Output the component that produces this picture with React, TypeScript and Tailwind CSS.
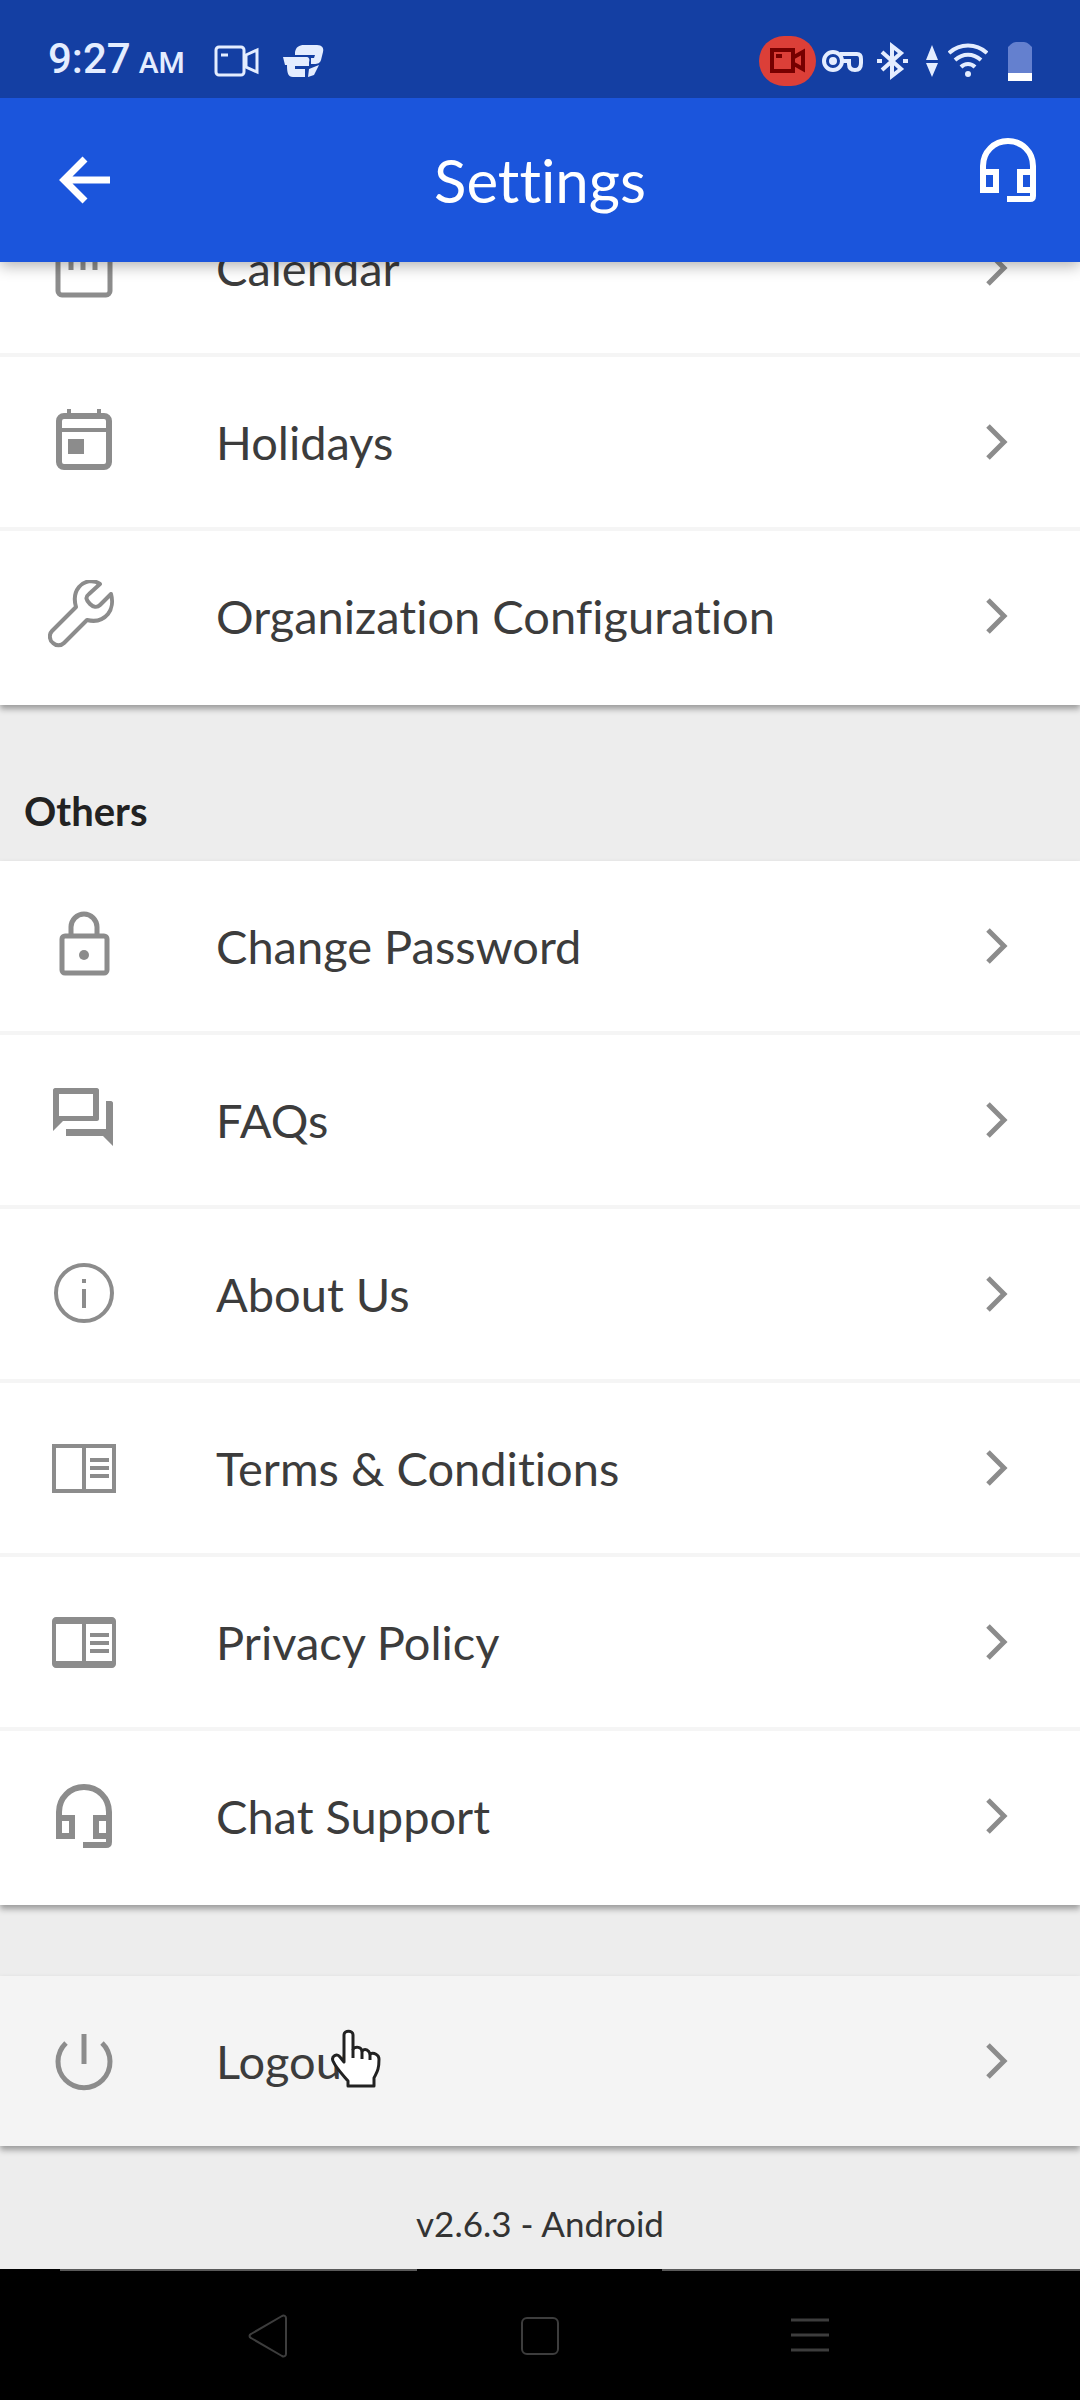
import type { ReactNode } from 'react';

type Item = { label: string; icon: ReactNode };

const Glyph = ({ children }: { children: ReactNode }) => (
    <svg
        className="size-18 shrink-0"
        viewBox="0 0 72 72"
        fill="none"
        stroke="currentColor"
        strokeWidth={5}
        aria-hidden="true"
    >
        {children}
    </svg>
);

const CalendarIcon = () => (
    <Glyph>
        <rect x="10" y="11" width="52" height="52" rx="4" strokeWidth={5} />
        <path d="M10 22H62M21 4V10M51 4V10" strokeWidth={4} />
        <path d="M23 30V38M35 30V38M47 30V38" />
    </Glyph>
);

const HolidayIcon = () => (
    <Glyph>
        <rect x="11" y="10" width="50" height="51" rx="5" strokeWidth={6} />
        <path d="M11 24H61M21 3V9M51 3V9" strokeWidth={4} />
        <rect x="20" y="33" width="16" height="15" fill="currentColor" stroke="none" />
    </Glyph>
);

const WrenchIcon = () => (
    <Glyph>
        <path
            d="M52 4C45 -1 36 1 31 7C26 13 26 20 28 27L4 51C1 54 1 60 5 63C8 66 13 66 16 63L39 40C47 42 55 40 60 34C64 29 65 21 63 14L52 25C49 28 45 27 42 24C38 20 37 17 41 14Z"
            strokeWidth={4}
            strokeLinejoin="round"
        />
    </Glyph>
);

const LockIcon = () => (
    <Glyph>
        <rect x="14" y="26" width="45" height="37" rx="3" />
        <path d="M23 26V17C23 10 29 4 36 4S49 10 49 17V26" />
        <circle cx="36" cy="45" r="5" fill="currentColor" stroke="none" />
    </Glyph>
);

const ForumIcon = () => (
    <Glyph>
        <path
            d="M7 4H49C50 4 51 5 51 6V35C51 36 50 37 49 37H15L5 47V6C5 5 6 4 7 4ZM11 10V32H45V10ZM58 17H63C64 17 65 18 65 19V62L55 52H18V45H58Z"
            fill="currentColor"
            fillRule="evenodd"
            stroke="none"
        />
    </Glyph>
);

const InfoIcon = () => (
    <Glyph>
        <circle cx="36" cy="35" r="28" strokeWidth={4} />
        <path d="M36 21V25M36 31V50" strokeWidth={4} />
    </Glyph>
);

const TermsIcon = () => (
    <Glyph>
        <path d="M6 14H66V59H6ZM36 14V59M42 28H61M42 36H61M42 44H61" strokeWidth={4} />
    </Glyph>
);

const PrivacyIcon = () => (
    <Glyph>
        <path
            d="M8 11H64C66 11 68 13 68 15V58C68 60 66 62 64 62H8C6 62 4 60 4 58V15C4 13 6 11 8 11ZM8 18V55H34V18ZM38 18V55H64V18Z"
            fill="currentColor"
            fillRule="evenodd"
            stroke="none"
        />
        <path d="M42 29H61M42 37H61M42 45H61" strokeWidth={4} />
    </Glyph>
);

const HeadsetIcon = () => (
    <Glyph>
        <path d="M11 38V32C11 18 22 7 36 7S61 18 61 32V62C61 64 60 65 58 65H35" strokeWidth={6} />
        <path d="M11 38H24V56H11ZM61 38H48V56H61" strokeWidth={6} />
    </Glyph>
);

const PowerIcon = () => (
    <Glyph>
        <path d="M18 18A26 26 0 1 0 54 18M36 9V39" strokeWidth={5} />
    </Glyph>
);

const Chevron = () => (
    <svg className="h-9 w-6 shrink-0" viewBox="0 0 24 36" fill="none" stroke="currentColor" strokeWidth={5} aria-hidden="true">
        <path d="M4 2L20 18L4 34" />
    </svg>
);

const HandCursor = () => (
    <svg className="absolute left-[114px] -top-1 h-[60px] w-[52px]" viewBox="0 0 52 60" aria-hidden="true">
        <path
            d="M14 33V6C14 1 23 1 23 6V20C26 17 31 18 32 22C35 19 39 21 40 25C44 23 49 26 49 30C49 41 47 43 44 49V57H18V52C12 45 6 39 3 32C1 27 7 24 10 28Z"
            fill="#fff"
            stroke="#222"
            strokeWidth={3}
            strokeLinejoin="round"
        />
        <path d="M23 20V29M32 22V30M40 25V31" stroke="#222" strokeWidth={3} />
    </svg>
);

const orgItems: Item[] = [
    { label: 'Calendar', icon: <CalendarIcon /> },
    { label: 'Holidays', icon: <HolidayIcon /> },
    { label: 'Organization Configuration', icon: <WrenchIcon /> },
];

const otherItems: Item[] = [
    { label: 'Change Password', icon: <LockIcon /> },
    { label: 'FAQs', icon: <ForumIcon /> },
    { label: 'About Us', icon: <InfoIcon /> },
    { label: 'Terms & Conditions', icon: <TermsIcon /> },
    { label: 'Privacy Policy', icon: <PrivacyIcon /> },
    { label: 'Chat Support', icon: <HeadsetIcon /> },
];

const Row = ({ label, icon, children }: Item & { children?: ReactNode }) => (
    <button type="button" className="flex h-[170px] w-full items-center pr-[72px] pl-12 text-left text-[#8c8c8c]">
        {icon}
        <span className="relative ml-24 flex-1 text-[47px] leading-[56px] text-[#3c3c3c]">
            {label}
            {children}
        </span>
        <Chevron />
    </button>
);

const Card = ({ items }: { items: Item[] }) => (
    <ul className="bg-white shadow-[0_4px_6px_rgba(0,0,0,0.35)]">
        {items.map((item) => (
            <li key={item.label} className="border-b-4 border-[#f5f5f5] last:border-white">
                <Row {...item} />
            </li>
        ))}
    </ul>
);

const StatusBar = () => (
    <div className="flex h-[98px] items-center justify-between bg-[#143fa3] pt-6 pr-12 pl-12 text-[#e4edff]">
        <div className="flex items-center">
            <p className="flex items-baseline gap-2 font-[Roboto,sans-serif] text-[42px] leading-[52px] font-medium">
                9:27 <span className="text-[30px]">AM</span>
            </p>
            <svg className="ml-7 h-8 w-12" viewBox="0 0 48 32" fill="none" stroke="currentColor" strokeWidth={3} aria-hidden="true">
                <rect x="3" y="2" width="28" height="28" rx="3" />
                <path d="M33 10L44 5V27L33 22ZM8 10H15" />
            </svg>
            <svg className="ml-5 h-9 w-11" viewBox="0 0 44 36" fill="currentColor" aria-hidden="true">
                <path d="M14 9C15 4 18 2 23 2H36C41 2 43 5 42 9L40 17C39 20 37 21 33 21H30V15H33L34 12H14Z" />
                <path d="M2 14H25C28 14 29 16 28 19V23H14V26H24V34H12C7 34 6 30 6 22H4Z" />
                <path d="M28 26L38 22L33 32L27 34Z" />
            </svg>
        </div>
        <div className="flex items-center">
            <span className="flex h-[50px] w-[57px] items-center justify-center rounded-full bg-[#dc3f38]">
                <svg className="h-7 w-9" viewBox="0 0 36 28" fill="none" stroke="#760000" strokeWidth={4} aria-hidden="true">
                    <path d="M2 3H23V24H2ZM24 10L33 5V22L24 17M6 9H12" />
                </svg>
            </span>
            <svg className="ml-1 h-7 w-11" viewBox="0 0 44 28" fill="none" stroke="currentColor" strokeWidth={4} aria-hidden="true">
                <circle cx="13" cy="14" r="9" />
                <circle cx="13" cy="14" r="2" fill="currentColor" />
                <path d="M20 7H37C40 7 41 9 41 12V16C41 21 39 23 35 23S29 21 29 17V14H22" />
            </svg>
            <svg className="ml-3 h-10 w-8" viewBox="0 0 32 40" fill="none" stroke="currentColor" strokeWidth={4} aria-hidden="true">
                <path d="M6 11L25 28L16 35V5L25 12L6 29" />
                <path d="M1 20H6M27 20H32" />
            </svg>
            <svg className="ml-4 h-8 w-4" viewBox="0 0 16 32" fill="currentColor" aria-hidden="true">
                <path d="M8 0L14 15H2ZM8 32L14 18H2Z" />
            </svg>
            <svg className="ml-2 h-9 w-10" viewBox="0 0 40 36" fill="none" stroke="currentColor" strokeWidth={4} aria-hidden="true">
                <path d="M1 10C12 0 28 0 39 10M7 17C15 10 25 10 33 17M13 24C17 20 23 20 27 24" />
                <circle cx="20" cy="31" r="3" fill="currentColor" stroke="none" />
            </svg>
            <svg className="ml-5 h-10 w-6" viewBox="0 0 24 40" aria-hidden="true">
                <path d="M0 6C2 4 5 1 8 1H16C19 1 22 4 24 6V40H0Z" fill="#6480cf" />
                <path d="M0 32H24V40H0Z" fill="#fff" />
            </svg>
        </div>
    </div>
);

const NavBar = () => (
    <nav className="bg-black text-[#3d3d3d]">
        <div className="flex h-[2px] justify-between pl-[60px]">
            <span className="w-[35%] bg-[#5a5a5a]" />
            <span className="w-[41%] bg-[#5a5a5a]" />
        </div>
        <div className="grid h-[129px] grid-cols-3 items-center justify-items-center px-[12.5%]">
            <button type="button" aria-label="Back">
                <svg className="size-11" viewBox="0 0 44 44" fill="none" stroke="currentColor" strokeWidth={2} strokeLinejoin="round">
                    <path d="M34 2C36 1 38 2 38 4V40C38 42 36 43 34 42L3 24C1 23 1 21 3 20Z" />
                </svg>
            </button>
            <button type="button" aria-label="Home">
                <svg className="size-11" viewBox="0 0 44 44" fill="none" stroke="currentColor" strokeWidth={2}>
                    <rect x="4" y="4" width="36" height="36" rx="5" />
                </svg>
            </button>
            <button type="button" aria-label="Recent apps">
                <svg className="size-11" viewBox="0 0 44 44" fill="none" stroke="currentColor" strokeWidth={3}>
                    <path d="M3 6H41M3 21H41M3 36H41" />
                </svg>
            </button>
        </div>
    </nav>
);

export default function App() {
    return (
        <div className="flex min-h-screen flex-col overflow-hidden bg-[#ededed] font-[Lato,sans-serif] [font-variant-ligatures:none]">
            <div className="relative z-10 shadow-[0_4px_14px_rgba(0,0,0,0.3)]">
                <StatusBar />
                <header className="grid h-[164px] grid-cols-[1fr_auto_1fr] items-center bg-[#1b55dc] text-white">
                    <button type="button" aria-label="Back" className="ml-12 justify-self-start">
                        <svg className="size-18" viewBox="0 0 72 72" fill="none" stroke="currentColor" strokeWidth={7}>
                            <path d="M37 15L16 36L37 57M15 36H62" />
                        </svg>
                    </button>
                    <h1 className="text-[60px] leading-[72px]">Settings</h1>
                    <button type="button" aria-label="Chat support" className="mt-9 mr-9 self-start justify-self-end">
                        <HeadsetIcon />
                    </button>
                </header>
            </div>

            {/* list is scrolled, the first row sits partly under the header */}
            <main className="-mt-[79px] flex flex-1 flex-col">
                <Card items={orgItems} />
                <h2 className="px-6 pt-20 pb-6 text-[40px] leading-[52px] font-bold text-[#222]">Others</h2>
                <Card items={otherItems} />
                <div className="mt-[71px] bg-[#f4f4f4] shadow-[0_4px_6px_rgba(0,0,0,0.35)]">
                    <Row label="Logout" icon={<PowerIcon />}>
                        <HandCursor />
                    </Row>
                </div>
                <p className="flex flex-1 items-end justify-center pb-6 text-[35px] leading-[44px] text-[#333]">
                    v2.6.3 - Android
                </p>
            </main>
            <NavBar />
        </div>
    );
}
